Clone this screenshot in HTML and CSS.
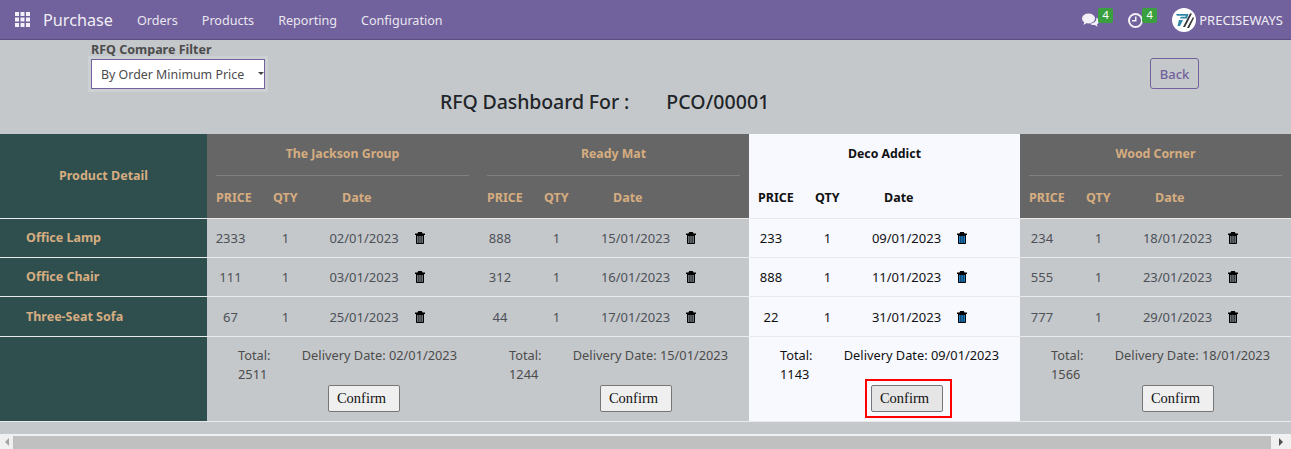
FILE: index.html
```html
<!DOCTYPE html>
<html lang="en">

<head>
    <meta charset="UTF-8">
    <meta name="viewport" content="width=device-width, initial-scale=1.0">
    <title>RFQ Dashboard</title>
    <link rel="stylesheet" href="styles.css">
</head>

<body>
    <svg class="sprites" width="0" height="0">
        <symbol id="trash" viewBox="0 0 10 12">
            <path d="M3.200 0h3.600l.8 1.500H10V3H9v8c0 .6-.4 1-1 1H2c-.6 0-1-.4-1-1V3H0V1.500h2.400z" />
            <path class="trash-fill" d="M2.100 4h1.400v6.900H2.100zM4.300 4h1.400v6.900H4.300zM6.500 4h1.400v6.900H6.500z" />
        </symbol>
    </svg>

    <header class="navbar">
        <svg class="apps" viewBox="0 0 15 15" width="15" height="15">
            <path d="M0 0h4v4H0zM5.500 0h4v4h-4zM11 0h4v4h-4zM0 5.500h4v4H0zM5.500 5.500h4v4h-4zM11 5.500h4v4h-4zM0 11h4v4H0zM5.500 11h4v4h-4zM11 11h4v4h-4z" />
        </svg>
        <span class="brand">Purchase</span>
        <nav class="menu">
            <a href="#">Orders</a>
            <a href="#">Products</a>
            <a href="#">Reporting</a>
            <a href="#">Configuration</a>
        </nav>
        <div class="systray">
            <span class="tray-item">
                <svg viewBox="0 0 17 14" width="17" height="14">
                    <ellipse cx="6.500" cy="5.500" rx="6.500" ry="5" />
                    <path d="M2.500 8.500 1.500 12l4-2.500z" />
                    <path d="M14.300 4.600c1.700.9 2.700 2.200 2.700 3.600 0 1.300-.8 2.400-2.100 3.200l.9 2.400-3.200-1.700c-1.700.1-3.600-.4-4.700-1.500 3.500.2 7.200-2 6.400-6z" />
                </svg>
                <b class="badge">4</b>
            </span>
            <span class="tray-item">
                <svg viewBox="0 0 15 15" width="15" height="15">
                    <path fill-rule="evenodd" d="M7.500 0a7.500 7.500 0 1 1 0 15 7.500 7.500 0 0 1 0-15zm0 2a5.500 5.500 0 1 0 0 11 5.500 5.500 0 0 0 0-11zM8.500 3.500v5h-4.500v-1.500h3V3.500z" />
                </svg>
                <b class="badge">4</b>
            </span>
            <span class="user">
                <svg class="logo" viewBox="0 0 24 24" width="24" height="24">
                    <circle cx="12" cy="12" r="12" fill="#fff" />
                    <path fill="#2f86a8" d="M4 6h12.500l-1.500 4.500H8l.8-1.700h4.700l.4-1H5z" />
                    <path fill="#2f86a8" d="M7 12h4l-3 6H5.500z" />
                    <path fill="#333" d="M18 5.500h2l-7 13.500h-2zM21 9l1 1-5 10h-2z" />
                </svg>
                PRECISEWAYS
            </span>
        </div>
    </header>

    <section class="toolbar">
        <div class="filter">
            <label class="filter-label" for="compare">RFQ Compare Filter</label>
            <div class="select-wrap">
                <select id="compare" class="filter-select">
                    <option>By Order Minimum Price</option>
                </select>
            </div>
        </div>
        <button class="back-btn">Back</button>
    </section>

    <h2 class="title"><span>RFQ Dashboard For :</span><span>PCO/00001</span></h2>

    <table class="compare">
        <thead>
            <tr>
                <th class="product">Product Detail</th>
                <th class="vendor">
                    <div class="vendor-name">The Jackson Group</div>
                    <div class="cols"><span class="head-price">PRICE</span><span class="head-qty">QTY</span><span class="head-date">Date</span></div>
                </th>
                <th class="vendor">
                    <div class="vendor-name">Ready Mat</div>
                    <div class="cols"><span class="head-price">PRICE</span><span class="head-qty">QTY</span><span class="head-date">Date</span></div>
                </th>
                <th class="vendor best">
                    <div class="vendor-name">Deco Addict</div>
                    <div class="cols"><span class="head-price">PRICE</span><span class="head-qty">QTY</span><span class="head-date">Date</span></div>
                </th>
                <th class="vendor">
                    <div class="vendor-name">Wood Corner</div>
                    <div class="cols"><span class="head-price">PRICE</span><span class="head-qty">QTY</span><span class="head-date">Date</span></div>
                </th>
            </tr>
        </thead>
        <tbody>
            <tr>
                <td class="product">Office Lamp</td>
                <td class="quote first"><div class="cols"><span>2333</span><span>1</span><span>02/01/2023</span><svg class="trash"><use href="#trash" /></svg></div></td>
                <td class="quote"><div class="cols"><span>888</span><span>1</span><span>15/01/2023</span><svg class="trash"><use href="#trash" /></svg></div></td>
                <td class="quote best"><div class="cols"><span>233</span><span>1</span><span>09/01/2023</span><svg class="trash"><use href="#trash" /></svg></div></td>
                <td class="quote"><div class="cols"><span>234</span><span>1</span><span>18/01/2023</span><svg class="trash"><use href="#trash" /></svg></div></td>
            </tr>
            <tr>
                <td class="product">Office Chair</td>
                <td class="quote first"><div class="cols"><span>111</span><span>1</span><span>03/01/2023</span><svg class="trash"><use href="#trash" /></svg></div></td>
                <td class="quote"><div class="cols"><span>312</span><span>1</span><span>16/01/2023</span><svg class="trash"><use href="#trash" /></svg></div></td>
                <td class="quote best"><div class="cols"><span>888</span><span>1</span><span>11/01/2023</span><svg class="trash"><use href="#trash" /></svg></div></td>
                <td class="quote"><div class="cols"><span>555</span><span>1</span><span>23/01/2023</span><svg class="trash"><use href="#trash" /></svg></div></td>
            </tr>
            <tr class="last-quote">
                <td class="product">Three-Seat Sofa</td>
                <td class="quote first"><div class="cols"><span>67</span><span>1</span><span>25/01/2023</span><svg class="trash"><use href="#trash" /></svg></div></td>
                <td class="quote"><div class="cols"><span>44</span><span>1</span><span>17/01/2023</span><svg class="trash"><use href="#trash" /></svg></div></td>
                <td class="quote best"><div class="cols"><span>22</span><span>1</span><span>31/01/2023</span><svg class="trash"><use href="#trash" /></svg></div></td>
                <td class="quote"><div class="cols"><span>777</span><span>1</span><span>29/01/2023</span><svg class="trash"><use href="#trash" /></svg></div></td>
            </tr>
            <tr class="totals">
                <td class="product"></td>
                <td class="total">
                    <div class="total-line"><span class="total-amount">Total:<br>2511</span><span>Delivery Date: 02/01/2023</span></div>
                    <div class="confirm-row"><span class="confirm-wrap"><button class="confirm">Confirm</button></span></div>
                </td>
                <td class="total">
                    <div class="total-line"><span class="total-amount">Total:<br>1244</span><span>Delivery Date: 15/01/2023</span></div>
                    <div class="confirm-row"><span class="confirm-wrap"><button class="confirm">Confirm</button></span></div>
                </td>
                <td class="total best">
                    <div class="total-line"><span class="total-amount">Total:<br>1143</span><span>Delivery Date: 09/01/2023</span></div>
                    <div class="confirm-row"><span class="confirm-wrap marked"><button class="confirm">Confirm</button></span></div>
                </td>
                <td class="total">
                    <div class="total-line"><span class="total-amount">Total:<br>1566</span><span>Delivery Date: 18/01/2023</span></div>
                    <div class="confirm-row"><span class="confirm-wrap"><button class="confirm">Confirm</button></span></div>
                </td>
            </tr>
        </tbody>
    </table>

    <div class="hscroll">
        <span class="arrow-left"></span>
        <span class="thumb"></span>
        <span class="arrow-right"></span>
    </div>
</body>

</html>
```

FILE: styles.css
```css
* {
    box-sizing: border-box;
}

html,
body {
    height: 449px;
}

body {
    margin: 0;
    display: flex;
    flex-direction: column;
    overflow: hidden;
    background: #c5c8cb;
    color: #4c4c4c;
    font-family: "Noto Sans", Arial, sans-serif;
    font-size: 12.800px;
}

.sprites {
    position: absolute;
}

/* top bar */
.navbar {
    height: 40px;
    flex: none;
    display: flex;
    align-items: center;
    padding: 0 8px 0 15px;
    background: #71619c;
    border-bottom: 1px solid #5b4e80;
    color: #fff;
}

.apps {
    fill: #f3f1f7;
}

.brand {
    margin-left: 13px;
    font-size: 16.200px;
    color: #f0eef5;
}

.menu {
    display: flex;
    gap: 24px;
    margin: 1px 0 0 24px;
}

.menu a {
    color: #e9e6f0;
    text-decoration: none;
    font-size: 12.600px;
}

.systray {
    margin-left: auto;
    align-self: stretch;
    display: flex;
    align-items: center;
}

.tray-item {
    display: flex;
    align-items: flex-start;
    align-self: flex-start;
    height: 24px;
    margin: 8px 15px 0 0;
}

.tray-item svg {
    fill: #f3f1f7;
    margin-top: 5px;
}

.badge {
    width: 15px;
    height: 15px;
    margin-left: -1px;
    border-radius: 2px;
    background: #3a9f3e;
    color: #fff;
    font-size: 11px;
    font-weight: 400;
    line-height: 14px;
    text-align: center;
}

.user {
    display: flex;
    align-items: center;
    gap: 3px;
    font-size: 13px;
    color: #f0eef5;
}

/* filter row */
.toolbar {
    display: flex;
    justify-content: space-between;
    align-items: flex-end;
    flex: none;
    height: 49px;
    padding: 0 92px 0 91px;
}

.filter-label {
    display: block;
    font-size: 12.500px;
    font-weight: 700;
    margin-bottom: 1px;
}

.select-wrap {
    position: relative;
    width: 174px;
    outline: 3px solid #ced1d3;
}

.select-wrap::after {
    content: "";
    position: absolute;
    right: 1px;
    top: 13px;
    border: 3.500px solid transparent;
    border-top-color: #444;
    border-bottom: 0;
}

.filter-select {
    display: block;
    width: 100%;
    height: 30px;
    padding: 0 0 0 9px;
    appearance: none;
    border: 1px solid #71619c;
    border-radius: 0;
    background: #fff;
    color: #4c4c4c;
    font-family: inherit;
    font-size: 12.400px;
}

.back-btn {
    width: 49px;
    height: 31px;
    padding: 0;
    border: 1px solid #71619c;
    border-radius: 3px;
    background: transparent;
    color: #71619c;
    font-family: inherit;
    font-size: 13px;
    font-weight: 500;
}

.title {
    flex: none;
    display: flex;
    gap: 37px;
    height: 45px;
    margin: 0;
    padding: 0 0 0 440px;
    color: #212529;
    font-size: 19.500px;
    font-weight: 500;
    line-height: 26px;
}

.title span:first-child {
    letter-spacing: -0.1px;
}

.title span:last-child {
    letter-spacing: 0.1px;
}

/* compare table */
.compare {
    flex: none;
    width: 1291px;
    table-layout: fixed;
    border-collapse: collapse;
}

.compare th,
.compare td {
    padding: 0;
    border-bottom: 1px solid #e8eaec;
}

th.product,
td.product {
    width: 207px;
    background: #2f4f4f;
    color: #d6ad80;
    font-size: 12.500px;
    font-weight: 700;
}

th.product {
    text-align: center;
}

td.product {
    padding-left: 26px;
}

.vendor {
    width: 271px;
    height: 84px;
    background: #666;
    color: #d6ad80;
    font-size: 12.500px;
    font-weight: 700;
    vertical-align: top;
}

.vendor-name {
    height: 42px;
    margin: 0 9px;
    border-bottom: 1px solid #808080;
    font-size: 12.300px;
    line-height: 40px;
    text-align: center;
}

.cols {
    display: grid;
    grid-template-columns: 44px 69px 89px 22px;
    align-items: center;
}

.vendor .cols {
    height: 41px;
    padding: 2px 0 0 9px;
    grid-template-columns: 57px 44px auto;
    text-align: left;
}

.head-date {
    padding-left: 25px;
}

.quote {
    height: 39.300px;
    color: #4c5158;
    font-size: 13px;
}

.last-quote .quote {
    height: 40px;
}

.quote .cols {
    text-align: center;
}

.quote.first .cols {
    grid-template-columns: 47px 63px 94px 20px;
}

.trash {
    --stripe: #7a8288;
    width: 10px;
    height: 12px;
    margin-left: 6px;
    fill: #000;
}

.first .trash {
    margin-left: 4px;
}

.trash-fill {
    fill: var(--stripe);
}

.best .trash {
    --stripe: #1f8fe0;
}

.best.vendor {
    background: #f8f9ff;
    color: #111;
}

.best.vendor .vendor-name {
    border-bottom-color: transparent;
}

.best.quote,
.best.total {
    background: #f8f9ff;
    color: #111;
}

.total {
    height: 85px;
    vertical-align: top;
}

.total-line {
    display: flex;
    justify-content: space-between;
    padding: 9px 21px 0 31px;
    line-height: 19px;
}

.confirm-row {
    display: flex;
    justify-content: center;
    margin-top: 1px;
    padding-left: 44px;
}

.total:nth-child(2) .confirm-row {
    padding-left: 42px;
}

.confirm-wrap {
    position: relative;
    display: block;
    height: 27px;
}

.confirm {
    display: block;
    width: 72px;
    height: 27px;
    padding: 0 4px 0 0;
    border: 1px solid #767676;
    border-radius: 2px;
    background: #efefef;
    color: #111;
    font-family: "Liberation Serif", serif;
    font-size: 14.500px;
}

.marked .confirm {
    background: #e5e5e5;
}

.marked::after {
    content: "";
    position: absolute;
    inset: -6px -9px -6px -6px;
    border: 2px solid #f00;
}

/* fake horizontal scrollbar of the page */
.hscroll {
    flex: none;
    display: flex;
    align-items: center;
    height: 16px;
    margin-top: 12px;
    background: #f0f0f0;
}

.thumb {
    flex: 1;
    height: 13px;
    background: #c0c0c0;
}

.arrow-left,
.arrow-right {
    flex: none;
    width: 13px;
    display: flex;
    justify-content: center;
}

.arrow-left::before {
    content: "";
    border: 4px solid transparent;
    border-right-color: #a3a3a3;
    border-left: 0;
}

.arrow-right {
    width: 20px;
}

.arrow-right::before {
    content: "";
    border: 4px solid transparent;
    border-left-color: #505050;
    border-right: 0;
}
```
